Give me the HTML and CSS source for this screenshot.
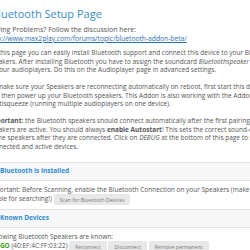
FILE: index.html
```html
<!DOCTYPE html>
<html lang="en">
<head>
    <meta charset="UTF-8">
    <meta name="viewport" content="width=device-width, initial-scale=1.0">
    <title>Bluetooth Setup Page</title>
    <link rel="stylesheet" href="styles.css">
</head>
<body>
    <div id="page">
        <h1 class="title">Bluetooth Setup Page</h1>

        <div class="help">
            Having Problems? Follow the discussion here:<br>
            <a href="#">http://www.max2play.com/forums/topic/bluetooth-addon-beta/</a>
        </div>

        <p>
            On this page you can easily install Bluetooth support and connect this device to your Bluetooth<br>
            speakers. After installing Bluetooth you have to assign the soundcard <i>Bluetoothspeaker</i> or<br>
            to your audioplayers. Do this on the Audioplayer page in advanced settings.
        </p>

        <p>
            To make sure your Speakers are reconnecting automatically on reboot, first start this device<br>
            and then power up your Bluetooth speakers. This Addon is also working with the Addon<br>
            Multisqueeze (running multiple audioplayers on one device).
        </p>

        <p>
            <b>Important:</b> the Bluetooth speakers should connect automatically after the first pairing, if<br>
            speakers are active. You should always <b>enable Autostart</b>! This sets the correct sound-output<br>
            of the speakers after they are connected. Click on <i>DEBUG</i> at the bottom of this page to see<br>
            connected and active devices.
        </p>

        <div class="panel">
            <div class="panel-head">Bluetooth is installed</div>
            <div class="panel-body">
                Important: Before Scanning, enable the Bluetooth Connection on your Speakers (make them<br>
                visible for searching!) <button class="btn">Scan for Bluetooth Devices</button>
            </div>
        </div>

        <div class="panel">
            <div class="panel-head">Known Devices</div>
            <div class="panel-body">
                Following Bluetooth Speakers are known:<br>
                <b class="device">JBL GO</b> (40:EF:4C:FF:03:22)
                <button class="btn">Reconnect</button>
                <button class="btn">Disconnect</button>
                <button class="btn">Remove permanent</button>
            </div>
        </div>
    </div>
</body>
</html>
```

FILE: styles.css
```css
html, body { overflow: hidden; }

body {
    margin: 0;
    background-color: white;
    color: #555;
    font-family: "Open Sans", sans-serif;
    font-size: 6.5px;
    line-height: 8.5px;
}

#page {
    width: 440px;
    margin-left: -12px;
    white-space: nowrap;
}

.title {
    margin: 7px 0 5px 3px;
    font-size: 11px;
    line-height: 14px;
    font-weight: normal;
    color: #3c8dc9;
}

.help {
    margin-bottom: 6px;
    font-size: 7px;
}

.help a {
    color: #2a6db3;
    font-size: 6.7px;
}

p {
    margin: 0 0 8.5px 0;
}

.panel {
    margin: 11px 0 0 -6px;
}

.panel + .panel {
    margin-top: 0;
}

.panel-head {
    padding: 4px 0 4px 18px;
    background-color: #f7f7f7;
    border-top: 1px solid #e2e2e2;
    border-bottom: 1px solid #e2e2e2;
    color: #2b8ccf;
    font-weight: bold;
}

.panel-body {
    padding: 5px 6px 4px 6px;
}

.device { color: #3a9a1c; }

.btn {
    font-family: "Open Sans", sans-serif;
    font-size: 5.2px;
    color: #777;
    background-color: #e8e8e8;
    border: none;
    border-radius: 2px;
    padding: 0 6px;
    height: 11px;
    vertical-align: middle;
}
```
